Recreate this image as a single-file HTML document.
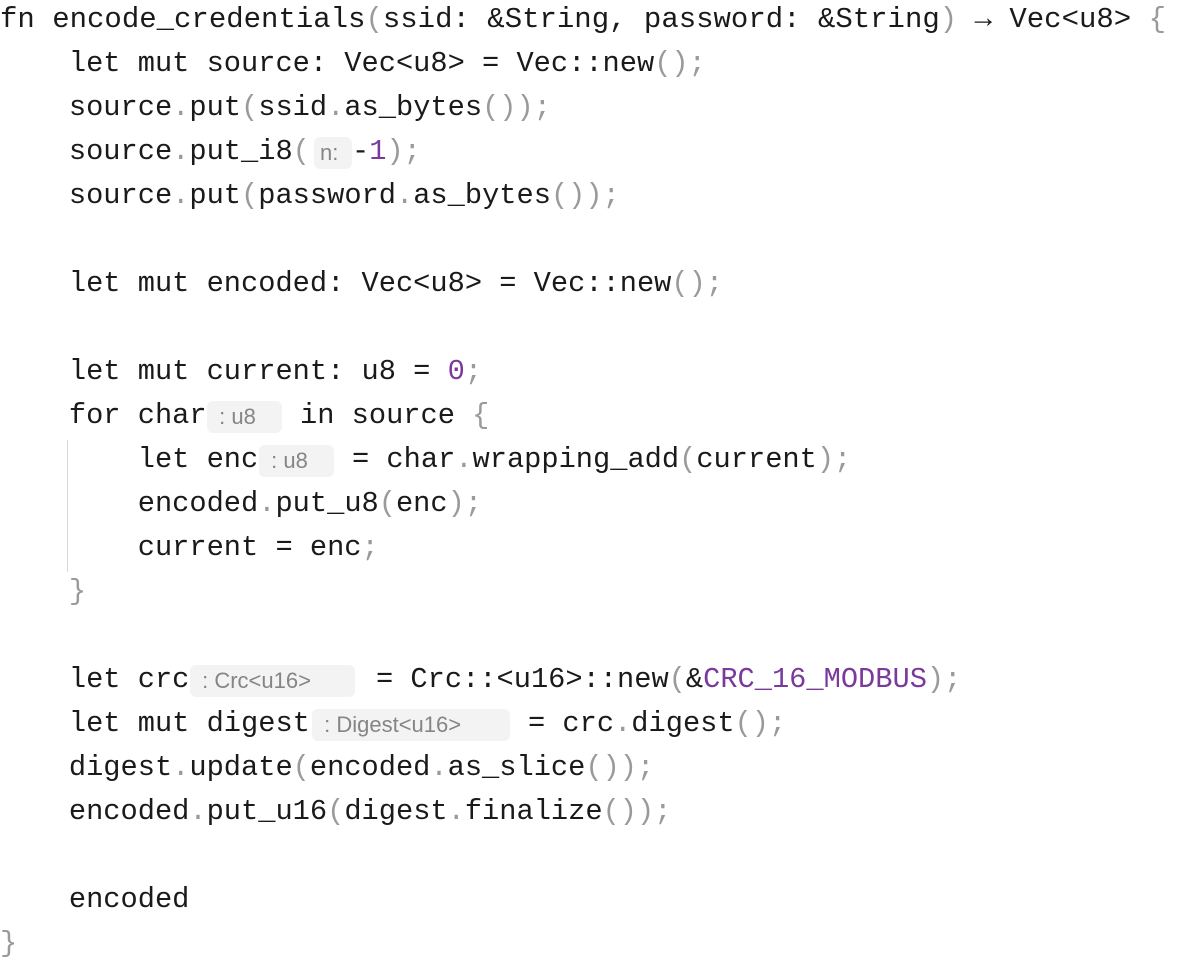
<!DOCTYPE html><html><head><meta charset="utf-8"><style>
body{margin:0;width:1178px;height:966px;background:#fff;overflow:hidden;position:relative}
.l{position:absolute;left:0;height:44px;line-height:44px;font-family:"Liberation Mono",monospace;font-size:28.7px;color:#1a1a1a;white-space:pre}
.p{color:#9a9a9a}.n{color:#7a3a9c}
.h{position:absolute;height:32px;line-height:32px;background:#f3f3f3;border-radius:6px;font-family:"Liberation Sans",sans-serif;font-size:22px;color:#858585;white-space:pre;box-sizing:border-box;padding-left:6px}
.g{position:absolute;left:67px;top:440px;width:1px;height:132px;background:#d8d8d8}
</style></head><body>
<div class="l" style="top:-2px;font-size:29px">fn encode_credentials<span class="p">(</span>ssid: &amp;String, password: &amp;String<span class="p">)</span> → Vec&lt;u8&gt; <span class="p">{</span></div>
<div class="l" style="top:42px">    let mut source: Vec&lt;u8&gt; = Vec::new<span class="p">()</span><span class="p">;</span></div>
<div class="l" style="top:86px">    source<span class="p">.</span>put<span class="p">(</span>ssid<span class="p">.</span>as_bytes<span class="p">())</span><span class="p">;</span></div>
<div class="l" style="top:130px">    source<span class="p">.</span>put_i8<span class="p">(</span></div>
<div class="h" style="left:314px;top:137px;width:38px">n:</div>
<div class="l" style="top:130px;left:352px"><span>-</span><span class="n">1</span><span class="p">);</span></div>
<div class="l" style="top:174px">    source<span class="p">.</span>put<span class="p">(</span>password<span class="p">.</span>as_bytes<span class="p">())</span><span class="p">;</span></div>
<div class="l" style="top:262px">    let mut encoded: Vec&lt;u8&gt; = Vec::new<span class="p">();</span></div>
<div class="l" style="top:350px">    let mut current: u8 = <span class="n">0</span><span class="p">;</span></div>
<div class="l" style="top:394px">    for char</div>
<div class="h" style="left:207px;top:401px;width:75px"> : u8</div>
<div class="l" style="top:394px;left:300px">in source <span class="p">{</span></div>
<div class="g"></div>
<div class="l" style="top:438px">        let enc</div>
<div class="h" style="left:259px;top:445px;width:75px"> : u8</div>
<div class="l" style="top:438px;left:352px">= char<span class="p">.</span>wrapping_add<span class="p">(</span>current<span class="p">);</span></div>
<div class="l" style="top:482px">        encoded<span class="p">.</span>put_u8<span class="p">(</span>enc<span class="p">);</span></div>
<div class="l" style="top:526px">        current = enc<span class="p">;</span></div>
<div class="l" style="top:570px">    <span class="p">}</span></div>
<div class="l" style="top:658px">    let crc</div>
<div class="h" style="left:190px;top:665px;width:165px"> : Crc&lt;u16&gt;</div>
<div class="l" style="top:658px;left:376px">= Crc::&lt;u16&gt;::new<span class="p">(</span>&amp;<span class="n">CRC_16_MODBUS</span><span class="p">);</span></div>
<div class="l" style="top:702px">    let mut digest</div>
<div class="h" style="left:312px;top:709px;width:198px"> : Digest&lt;u16&gt;</div>
<div class="l" style="top:702px;left:528px">= crc<span class="p">.</span>digest<span class="p">();</span></div>
<div class="l" style="top:746px">    digest<span class="p">.</span>update<span class="p">(</span>encoded<span class="p">.</span>as_slice<span class="p">());</span></div>
<div class="l" style="top:790px">    encoded<span class="p">.</span>put_u16<span class="p">(</span>digest<span class="p">.</span>finalize<span class="p">());</span></div>
<div class="l" style="top:878px">    encoded</div>
<div class="l" style="top:922px"><span class="p">}</span></div>
</body></html>
